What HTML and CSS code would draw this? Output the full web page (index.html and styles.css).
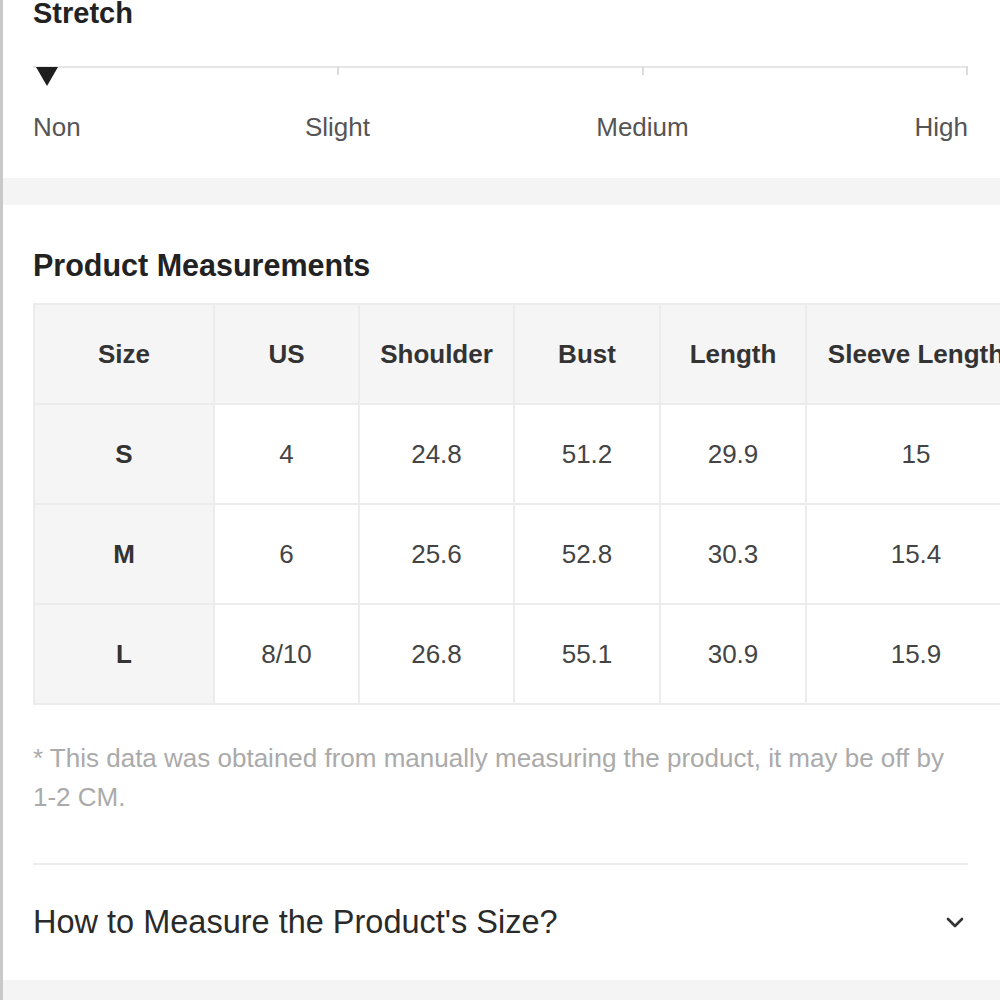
FILE: index.html
```html
<!DOCTYPE html>
<html lang="en">
<head>
    <meta charset="UTF-8">
    <meta name="viewport" content="width=device-width, initial-scale=1.0">
    <title>Size &amp; Fit</title>
    <link rel="stylesheet" href="styles.css">
</head>
<body>
    <div class="page">
        <div class="panel stretch">
            <h2 class="panel-title stretch-title">Stretch</h2>
            <div class="scale">
                <span class="scale-line"></span>
                <span class="tick tick-1"></span>
                <span class="tick tick-2"></span>
                <span class="tick tick-3"></span>
                <span class="marker"></span>
            </div>
            <div class="scale-labels">
                <span class="lbl-non">Non</span>
                <span class="lbl-slight">Slight</span>
                <span class="lbl-medium">Medium</span>
                <span class="lbl-high">High</span>
            </div>
        </div>

        <div class="panel measurements">
            <h2 class="panel-title">Product Measurements</h2>
            <div class="table-wrap">
                <table class="size-table">
                    <colgroup>
                        <col style="width:180px">
                        <col style="width:145px">
                        <col style="width:155px">
                        <col style="width:146px">
                        <col style="width:146px">
                        <col style="width:220px">
                    </colgroup>
                    <thead>
                        <tr>
                            <th>Size</th>
                            <th>US</th>
                            <th>Shoulder</th>
                            <th>Bust</th>
                            <th>Length</th>
                            <th>Sleeve Length</th>
                        </tr>
                    </thead>
                    <tbody>
                        <tr>
                            <th>S</th>
                            <td>4</td>
                            <td>24.8</td>
                            <td>51.2</td>
                            <td>29.9</td>
                            <td>15</td>
                        </tr>
                        <tr>
                            <th>M</th>
                            <td>6</td>
                            <td>25.6</td>
                            <td>52.8</td>
                            <td>30.3</td>
                            <td>15.4</td>
                        </tr>
                        <tr>
                            <th>L</th>
                            <td>8/10</td>
                            <td>26.8</td>
                            <td>55.1</td>
                            <td>30.9</td>
                            <td>15.9</td>
                        </tr>
                    </tbody>
                </table>
            </div>
            <p class="note">* This data was obtained from manually measuring the product, it may be off by <span class="nowrap">1-2 CM.</span></p>
            <div class="accordion">
                <span class="accordion-title">How to Measure the Product's Size?</span>
                <svg class="chevron" width="20" height="14" viewBox="0 0 20 14">
                    <path d="M3 3 L10 10 L17 3" fill="none" stroke="#333" stroke-width="2.6" stroke-linecap="round" stroke-linejoin="round"/>
                </svg>
            </div>
        </div>
    </div>
</body>
</html>
```

FILE: styles.css
```css
*{
    box-sizing: border-box;
    margin: 0;
    padding: 0;
}
body{
    font-family: "Liberation Sans", Arial, sans-serif;
    background-color: #f4f4f4;
    overflow: hidden;
}
.page{
    border-left: 3px solid #c9c9c9;
    min-height: 1000px;
    background-color: #f4f4f4;
}
.panel{
    display: flow-root;
    background-color: #fff;
    padding: 0 32px 0 30px;
}
.panel-title{
    font-size: 30.5px;
    font-weight: 700;
    color: #222;
    line-height: 30px;
}

/* stretch scale */
.stretch{
    height: 178px;
    margin-bottom: 27px;
}
.stretch-title{
    margin-top: -2px;
    font-size: 29px;
}
.scale{
    position: relative;
    height: 30px;
    margin-top: 33px;
}
.scale-line{
    position: absolute;
    left: 0;
    right: 0;
    top: 5px;
    height: 2px;
    background-color: #e6e6e6;
}
.tick{
    position: absolute;
    top: 5px;
    width: 2px;
    height: 9px;
    background-color: #dcdcdc;
}
.tick-1{ left: 304px; }
.tick-2{ left: 609px; }
.tick-3{ right: 0; }
.marker{
    position: absolute;
    left: 3px;
    top: 6px;
    width: 0;
    height: 0;
    border-left: 11px solid transparent;
    border-right: 11px solid transparent;
    border-top: 19px solid #1e1e1e;
}
.scale-labels{
    display: grid;
    grid-template-columns: 152px 305px 305px 1fr;
    margin-top: 21px;
    font-size: 26px;
    line-height: 30px;
    color: #555;
}
.lbl-slight,
.lbl-medium{ text-align: center; }
.lbl-high{ text-align: right; }

/* measurements */
.measurements{
    padding-top: 45px;
    height: 775px;
}
.table-wrap{
    margin-top: 23px;
    margin-right: -32px;
    overflow: hidden;
}
.size-table{
    width: 992px;
    table-layout: fixed;
    border-collapse: collapse;
    font-size: 26px;
    color: #444;
}
.size-table th,
.size-table td{
    height: 100px;
    text-align: center;
    border: 2px solid #ececec;
}
.size-table th{
    font-weight: 700;
    color: #333;
    background-color: #f5f5f5;
}
.size-table td{
    background-color: #fff;
}
.note{
    margin-top: 34px;
    font-size: 26px;
    line-height: 39px;
    color: #aaa;
}
.nowrap{
    white-space: nowrap;
}
.accordion{
    display: flex;
    justify-content: space-between;
    align-items: center;
    margin-top: 46px;
    border-top: 2px solid #ececec;
    height: 117px;
}
.accordion-title{
    font-size: 32.5px;
    color: #2a2a2a;
}
.chevron{
    margin-right: 3px;
}
```
